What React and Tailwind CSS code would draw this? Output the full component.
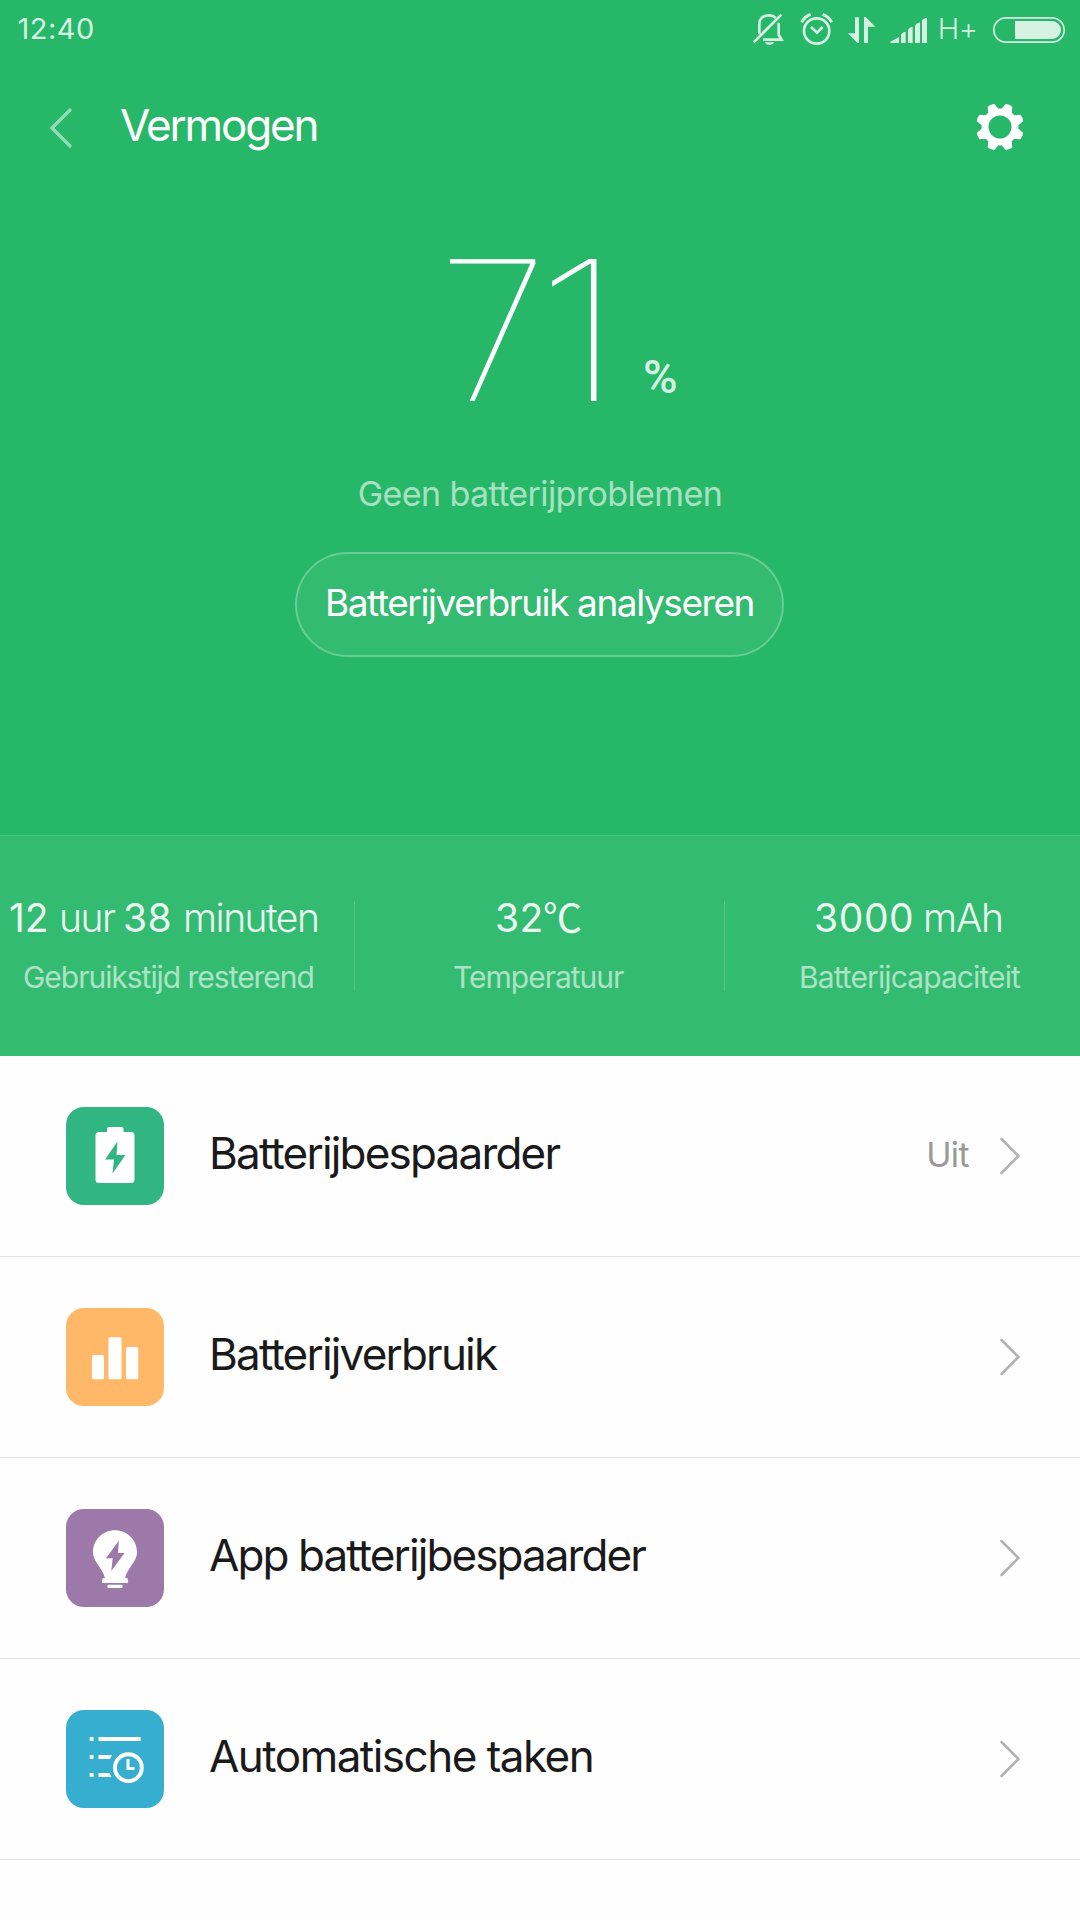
import React from 'react';

function BellOff() {
  return (
    <svg className="h-[37px] w-[35px]" viewBox="30 30 105 111" fill="none" stroke="currentColor">
      <path d="M41 127L124 44" strokeWidth="8" />
      <path d="M58 103V72C58 56 69 46 87 46C95 46 102 49 107 54" strokeWidth="8" />
      <path d="M69 119H125L116 105V68" strokeWidth="8" />
      <path d="M74 127H103C99 133 94 135 88.500 135C83 135 78 133 74 127Z" fill="currentColor" stroke="none" />
    </svg>
  );
}

function Alarm() {
  return (
    <svg className="h-[37px] w-[35px]" viewBox="178 30 105 111" fill="none" stroke="currentColor">
      <circle cx="231" cy="93" r="38" strokeWidth="8" />
      <path d="M214 81L232 98L249 81" strokeWidth="8" />
      <path d="M186 67C191 56 200 48 213 43" strokeWidth="9" />
      <path d="M276 67C271 56 262 48 249 43" strokeWidth="9" />
    </svg>
  );
}

function DataArrows() {
  return (
    <svg className="h-[37px] w-[29px]" viewBox="321 30 87 111" fill="currentColor">
      <path d="M345 52H357V129H352L324 100H345Z" />
      <path d="M372 51H377L406 80H384V129H372Z" />
    </svg>
  );
}

function Signal() {
  return (
    <svg className="h-[37px] w-[39px]" viewBox="447 30 117 111" fill="currentColor">
      <path d="M450 126L477 111V129H452Z" />
      <path d="M483 104Q484 98 497 95V129H483Z" />
      <path d="M504 90Q506 83 518 80V129H504Z" />
      <path d="M525 78Q527 71 540 67V129H525Z" />
      <path d="M546 62Q548 56 561 53V129H546Z" />
    </svg>
  );
}

function Battery() {
  return (
    <svg className="h-[37px] w-[74px]" viewBox="756 30 222 111" fill="none">
      <rect x="761.5" y="53.5" width="211" height="73" rx="36.500" stroke="currentColor" strokeWidth="5" />
      <path d="M825 63H936A27 27 0 0 1 936 117H825Z" fill="currentColor" />
    </svg>
  );
}

function Gear() {
  const teeth = [22.5, 67.5, 112.5, 157.5, 202.5, 247.5, 292.5, 337.5];
  return (
    <svg className="h-[48px] w-[48px]" viewBox="-24 -24 48 48">
      <circle r="15" fill="none" stroke="white" strokeWidth="7" />
      {teeth.map((a) => (
        <path key={a} d="M-6.300 -15L-3.600 -23.500Q0 -25 3.600 -23.500L6.300 -15Z" fill="white" transform={`rotate(${a})`} />
      ))}
    </svg>
  );
}

function Chevron() {
  return (
    <svg className="mb-px h-[38px] w-[21px]" viewBox="0 0 21 38" fill="none" stroke="#b2b2b2" strokeWidth="2.500" strokeLinecap="round">
      <path d="M1.500 2L18.500 19L1.500 36" />
    </svg>
  );
}

const glyphs = {
  saver: (
    <>
      <path d="M33 25H41V22Q41 20 43 20H55.500Q57.500 20 57.500 22V25H65Q68.500 25 68.500 28.500V72.500Q68.500 76 65 76H33Q29.500 76 29.500 72.500V28.500Q29.500 25 33 25Z" fill="white" />
      <path d="M51.500 34.500L39 52.500H48L46.500 66.500L59.500 48H50.500Z" fill="#30b583" />
    </>
  ),
  usage: (
    <g fill="white">
      <rect x="26" y="47" width="12" height="24.200" rx="1.500" />
      <rect x="42.500" y="29.300" width="13" height="42" rx="1.500" />
      <rect x="60" y="39" width="12.200" height="32.200" rx="1.500" />
    </g>
  ),
  bulb: (
    <>
      <path d="M49 21.300C61.500 21.300 71 31 71 43.300C71 53 62 58 59 69H61Q62.500 70 62 74H36Q35.500 70 37 69H39C36 58 27 53 27 43.300C27 31 36.500 21.300 49 21.300Z" fill="white" />
      <rect x="41.400" y="75.700" width="15.200" height="3.300" rx="1.200" fill="white" />
      <path d="M53 31.500L40 49.200H46.700L45.300 62L58.500 44H51.800Z" fill="#9c79a8" />
    </>
  ),
  tasks: (
    <g fill="white">
      <path d="M23.700 27H27.500V31H23.700ZM23.700 45H27.500V49H23.700ZM23.700 63H27.500V67H23.700Z" />
      <path d="M32.500 27H74.600V31H32.500ZM32.500 45H46L44 49H32.500ZM32.500 63H43.500L45.500 67H32.500Z" />
      <circle cx="62.400" cy="57.700" r="13.400" fill="none" stroke="white" strokeWidth="3.900" />
      <path d="M62 49V58.500H68.500" fill="none" stroke="white" strokeWidth="3" />
    </g>
  ),
};

const rows = [
  { title: 'Batterijbespaarder', glyph: 'saver', tile: 'bg-[#30b583]', tracking: 'tracking-[-1.8px]', value: 'Uit' },
  { title: 'Batterijverbruik', glyph: 'usage', tile: 'bg-[#ffb868]', tracking: 'tracking-[-1.8px]' },
  { title: 'App batterijbespaarder', glyph: 'bulb', tile: 'bg-[#9c79a8]', tracking: 'tracking-[-1.9px]' },
  { title: 'Automatische taken', glyph: 'tasks', tile: 'bg-[#35aed0]', tracking: 'tracking-[-1.52px]' },
];

const Divider = () => <div className="mt-[65px] h-[90px] w-px bg-white/15" />;

export default function App() {
  return (
    <div className="flex h-[1920px] w-[1080px] flex-col overflow-hidden whitespace-nowrap bg-[#fefefe] font-['Inter',sans-serif]">
      <section className="flex h-[835px] flex-col bg-[#27b768] text-white">
        <div className="flex h-[57px] justify-between pl-[17.5px] text-[29px] leading-[57px] text-[#d4f1e1]">
          <span className="tracking-[0.5px]">12:40</span>
          <div className="flex pr-[14px]">
            <div className="flex pt-[10px]">
              <BellOff />
              <span className="w-[14.300px]" />
              <Alarm />
              <span className="w-[12.700px]" />
              <DataArrows />
              <span className="w-[13px]" />
              <Signal />
            </div>
            <span className="ml-[9.700px] w-[54.300px] font-[350] tracking-[-0.2px]">H+</span>
            <div className="pt-[10px]">
              <Battery />
            </div>
          </div>
        </div>

        <header className="flex h-[136px] items-center pl-[49px] pr-[56px]">
          <svg className="mt-[6px] h-[42px] w-[24px]" viewBox="0 0 24 42" fill="none" stroke="white" strokeOpacity="0.5" strokeWidth="3.500" strokeLinecap="round">
            <path d="M21 3L3 21L21 39" />
          </svg>
          <h1 className="ml-[47px] grow text-[44px] tracking-[-2.15px]">Vermogen</h1>
          <div className="mt-[4px]">
            <Gear />
          </div>
        </header>

        <div className="mt-[40px] flex h-[195px] pl-[442px] text-[195px] font-thin leading-[195px]">
          <span className="w-[93px] origin-left skew-x-[3.600deg] scale-x-[1.036]">7</span>
          <span className="w-[72px] origin-left scale-x-[1.24]">1</span>
          <span className="ml-[36px] mt-[119px] font-['Roboto',sans-serif] text-[47px] font-medium leading-[49px] text-[#d4f1e1]">%</span>
        </div>

        <p className="mt-[46px] text-center text-[34px] leading-[40px] tracking-[-0.6px] text-white/60">Geen batterijproblemen</p>

        <button className="ml-[295px] mt-[38px] h-[105px] w-[489px] rounded-[53px] border-2 border-white/30 bg-[#34bb72] bg-clip-padding pb-[4px] text-[37px] tracking-[-1.42px]">
          Batterijverbruik analyseren
        </button>
      </section>

      <section className="flex h-[221px] border-t border-[#4ac381] bg-[#34bb72] text-white/90">
        <div className="w-[354px] pt-[58px]">
          <div className="ml-[9px] flex text-[39px] leading-[48px]">
            <span className="w-[50px]">12</span>
            <span className="w-[64px] font-[350] tracking-[-1.5px]">uur</span>
            <span className="w-[60px] tracking-[0.5px]">38</span>
            <span className="font-[350] tracking-[-1.5px]">minuten</span>
          </div>
          <div className="ml-[23px] mt-[17px] text-[30px] leading-[36px] tracking-[-1.03px] text-white/60">Gebruikstijd resterend</div>
        </div>
        <Divider />
        <div className="w-[369px] pt-[58px]">
          <div className="ml-[140px] flex h-[48px] text-[39px] leading-[48px]">
            <span className="w-[48px] tracking-[0.5px]">32</span>
            <span className="-mt-[3px] font-['Noto_Sans_CJK_SC',sans-serif]">℃</span>
          </div>
          <div className="ml-[98px] mt-[17px] text-[30px] leading-[36px] tracking-[-1px] text-white/60">Temperatuur</div>
        </div>
        <Divider />
        <div className="grow pt-[58px]">
          <div className="ml-[89px] flex text-[39px] leading-[48px]">
            <span className="w-[109px] tracking-[0.6px]">3000</span>
            <span className="font-[350] tracking-[-1.1px]">mAh</span>
          </div>
          <div className="ml-[74px] mt-[17px] text-[30px] leading-[36px] tracking-[-0.9px] text-white/60">Batterijcapaciteit</div>
        </div>
      </section>

      <main>
        {rows.map((row) => (
          <div key={row.title} className="flex h-[201px] items-center border-b border-[#e2e2e2] pl-[66px] pr-[59px]">
            <div className={`h-[98px] w-[98px] rounded-[18px] ${row.tile}`}>
              <svg className="h-[98px] w-[98px]" viewBox="0 0 98 98">{glyphs[row.glyph]}</svg>
            </div>
            <span className={`ml-[45px] grow pb-[6px] text-[44px] text-[#1a1a1a] ${row.tracking}`}>{row.title}</span>
            {row.value && <span className="mr-[31px] pb-[3px] text-[34px] tracking-[-0.6px] text-[#999]">{row.value}</span>}
            <Chevron />
          </div>
        ))}
      </main>
    </div>
  );
}
